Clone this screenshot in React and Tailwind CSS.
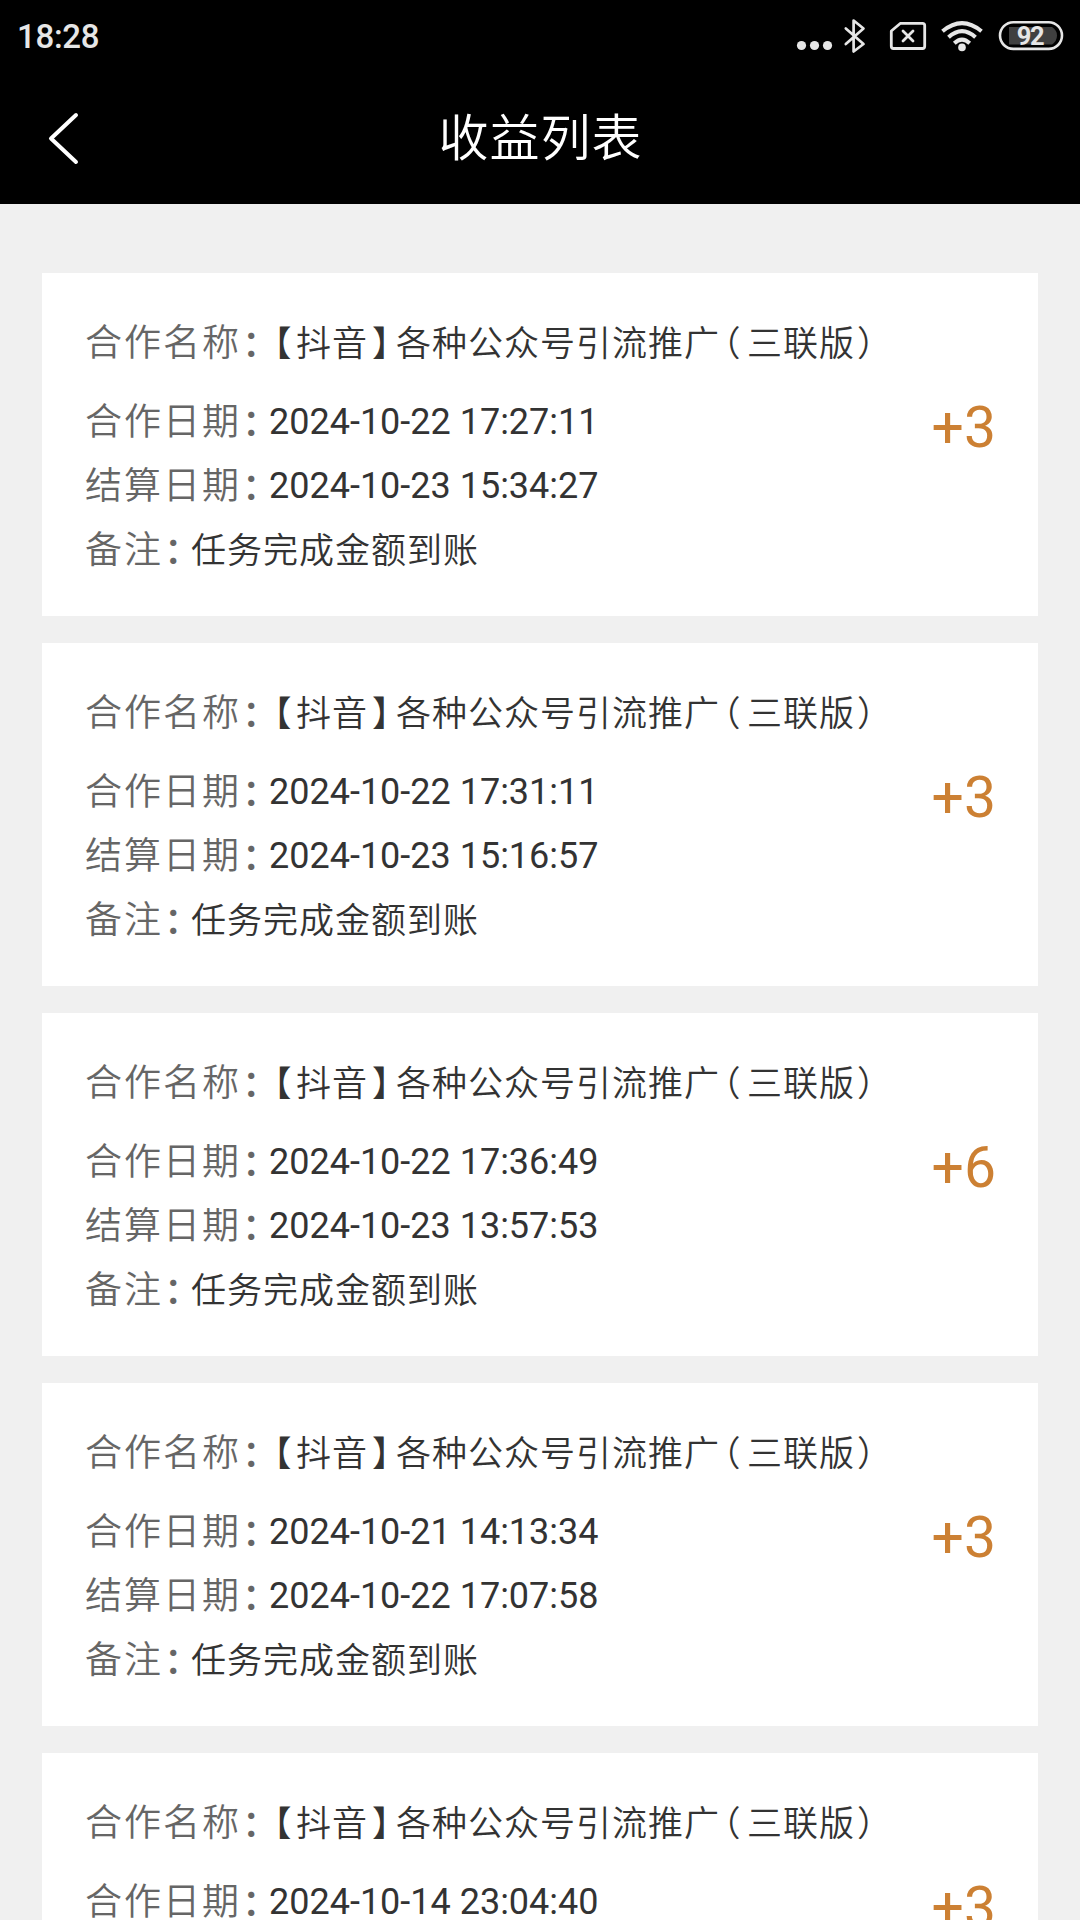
const records = [
  { id: 1, start: "2024-10-22 17:27:11", settled: "2024-10-23 15:34:27", amount: 3 },
  { id: 2, start: "2024-10-22 17:31:11", settled: "2024-10-23 15:16:57", amount: 3 },
  { id: 3, start: "2024-10-22 17:36:49", settled: "2024-10-23 13:57:53", amount: 6 },
  { id: 4, start: "2024-10-21 14:13:34", settled: "2024-10-22 17:07:58", amount: 3 },
  { id: 5, start: "2024-10-14 23:04:40", settled: "2024-10-15 16:20:12", amount: 3 },
];

const StatusBar = () => {
  return (
    <div className="flex items-center justify-between h-[72px] pl-[17px] pr-[16px]">
      <span className="pt-px text-[33px] leading-none font-medium tracking-[-0.3px] text-[#e6e6e6]">
        18:28
      </span>
      <svg width="270" height="72" viewBox="794 0 270 72" fill="none" stroke="#e6e6e6">
        <g fill="#e6e6e6" stroke="none">
          <circle cx="801.5" cy="45.5" r="4.6" />
          <circle cx="814.5" cy="45.5" r="4.6" />
          <circle cx="827.5" cy="45.5" r="4.6" />
        </g>
        {/* bluetooth */}
        <path
          d="M845.8 28.5 L863.5 44 L853.6 51.5 V20.5 L863.5 28.5 L845.8 44"
          strokeWidth="2.7"
          strokeLinecap="round"
          strokeLinejoin="round"
        />
        {/* no sim */}
        <path
          d="M900.5 23.3 H922.5 Q924.7 23.3 924.7 25.5 V46.3 Q924.7 48.5 922.5 48.5 H893.5 Q891.3 48.5 891.3 46.3 V31 Z"
          strokeWidth="2.8"
          strokeLinejoin="round"
        />
        <path d="M903 31 L913 41 M913 31 L903 41" strokeWidth="2.8" strokeLinecap="round" />
        {/* wifi */}
        <path d="M942.5 31.3 Q962 15 981.5 31.3" strokeWidth="4" />
        <path d="M948.5 37.3 Q962 25 975.5 37.3" strokeWidth="4" />
        <path d="M954.3 43.2 Q962 36 969.7 43.2" strokeWidth="4" />
        <circle cx="962" cy="47.4" r="3.8" fill="#e6e6e6" stroke="none" />
        {/* battery */}
        <rect x="1000" y="22.3" width="62" height="26.6" rx="13.3" strokeWidth="2.6" />
        <path d="M1009 27 H1052 Q1057 30 1057 35.5 Q1057 41 1052 44.5 H1009 Z" fill="#404040" stroke="none" />
        <text
          x="1030"
          y="44.6"
          textAnchor="middle"
          fontSize="25.5"
          fontWeight="700"
          letterSpacing="-1.5"
          fill="#e6e6e6"
          stroke="none"
        >
          92
        </text>
      </svg>
    </div>
  );
};

const NavBar = () => {
  return (
    <div className="grid grid-cols-[120px_1fr_120px] items-center h-[132px]">
      <svg className="ml-[46px]" width="36" height="60" viewBox="0 0 36 60" fill="none">
        <path
          d="M30 7 L5 30.5 L30 54"
          stroke="#fff"
          strokeWidth="4"
          strokeLinecap="round"
          strokeLinejoin="round"
        />
      </svg>
      <h1 className="pt-0.5 pl-px text-center text-[50px] leading-none font-[350] tracking-[1px] text-white">
        收益列表
      </h1>
    </div>
  );
};

// full-width punctuation takes a tighter box than the characters around it
const Punct = ({ className, children }) => (
  <span className={`inline-block tracking-normal [font-feature-settings:'halt'] ${className}`}>
    {children}
  </span>
);

const Row = ({ label, children }) => {
  return (
    <div className="flex items-baseline h-16 leading-[64px] whitespace-nowrap">
      <span className="text-[37px] font-[350] tracking-[2px] text-[#666]">{label}</span>
      <Punct className="w-7 pl-px translate-y-px text-[37px] font-medium text-[#666]">：</Punct>
      <span className="text-[35px] tracking-[1px] font-[350] text-[#333]">{children}</span>
    </div>
  );
};

const Timestamp = ({ value }) => (
  <span className="align-[1px] text-[36px] leading-none tracking-normal font-normal">{value}</span>
);

const RecordCard = ({ record }) => {
  return (
    <div className="flex justify-between h-[343px] pt-[39px] pl-[43px] pr-[42px] bg-white">
      <div className="flex flex-col">
        <div className="mb-[15px]">
          <Row label="合作名称">
            <Punct className="w-[27px] pl-[5px]">【</Punct>抖音
            <Punct className="w-7 pl-[4px]">】</Punct>各种公众号引流推广
            <Punct className="w-[27px] pl-[3px]">（</Punct>三联版
            <Punct className="w-7 pl-[2px]">）</Punct>
          </Row>
        </div>
        <Row label="合作日期">
          <Timestamp value={record.start} />
        </Row>
        <Row label="结算日期">
          <Timestamp value={record.settled} />
        </Row>
        <Row label="备注">任务完成金额到账</Row>
      </div>
      <span className="mt-[84px] h-16 text-[57px] leading-[64px] text-[#cc8033]">
        +{record.amount}
      </span>
    </div>
  );
};

const App = () => {
  return (
    <div className="w-[1080px] h-[1920px] overflow-hidden bg-[#f0f0f0] font-[Roboto,'Noto_Sans_CJK_SC',sans-serif]">
      <header className="bg-black">
        <StatusBar />
        <NavBar />
      </header>
      <main className="flex flex-col gap-[27px] px-[42px] pt-[69px]">
        {records.map((record) => (
          <RecordCard key={record.id} record={record} />
        ))}
      </main>
    </div>
  );
};

export default App;
